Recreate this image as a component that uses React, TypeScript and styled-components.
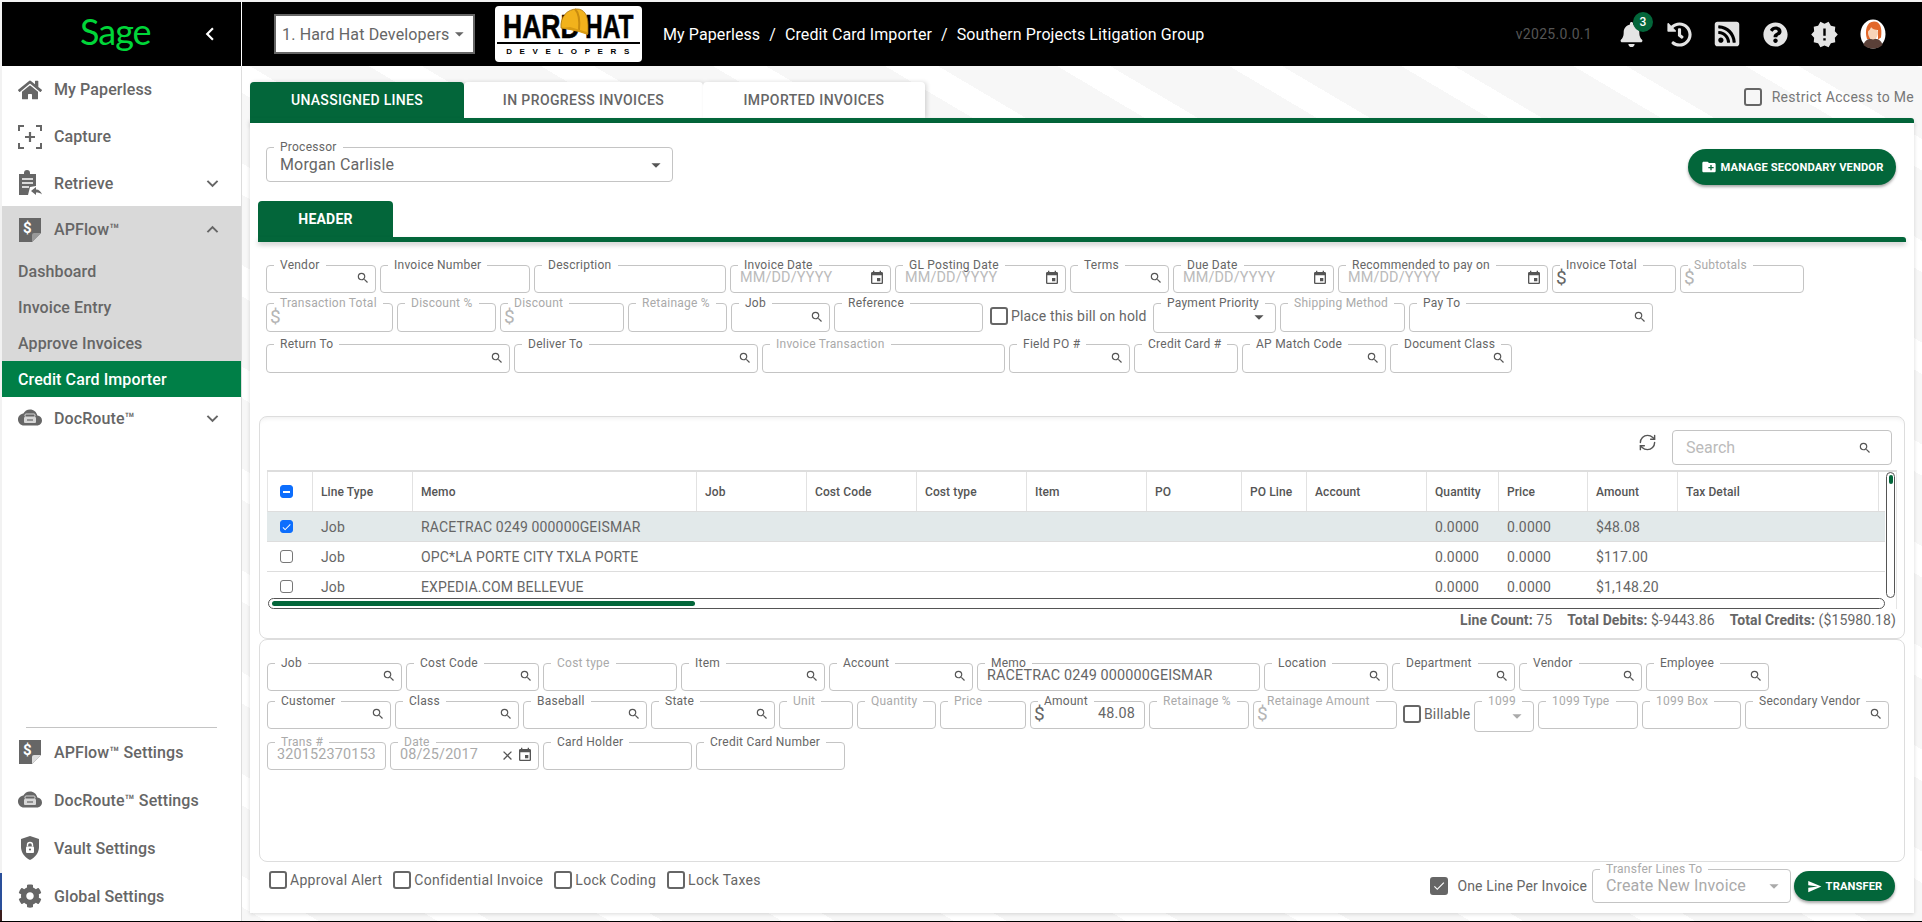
import React from 'react'
import styled, { createGlobalStyle } from 'styled-components'
import { FaHome, FaBell, FaHistory, FaRssSquare, FaQuestionCircle, FaCog } from 'react-icons/fa'
import {
  MdSearch, MdEvent, MdArrowDropDown, MdExpandMore, MdExpandLess, MdChevronLeft,
  MdNewReleases, MdCreateNewFolder, MdSend, MdCheck, MdClose,
} from 'react-icons/md'
import { RefreshCw } from 'lucide-react'

const GREEN = '#03663a'
const TEXT = '#666'
const LINE = '#c4c4c4'
const MUTED = '#aaa'

const GlobalStyle = createGlobalStyle`
  html, body { margin: 0; padding: 0; background: #f2f2f2; }
  body { font-family: Roboto, "Liberation Sans", sans-serif; color: ${TEXT}; }
  * { box-sizing: border-box; }
`

const Shell = styled.div`
  width: 1922px;
  height: 922px;
  overflow: hidden;
  display: flex;
  flex-direction: column;
  padding-top: 2px;
  background: #f2f2f2;
`

const TopBar = styled.header`
  height: 64px;
  margin-left: 2px;
  flex: none;
  display: flex;
  align-items: center;
  background: #000;
`

const Brand = styled.div`
  width: 240px;
  height: 100%;
  flex: none;
  display: flex;
  align-items: center;
  border-right: 1px solid #fff;
  padding-left: 78px;
`

const SageMark = styled.span`
  font-family: Lato, sans-serif;
  font-size: 36px;
  line-height: 1;
  letter-spacing: -1px;
  color: #00d639;
  margin-top: -6px;
  width: 117px;
`

const Collapse = styled.span`
  display: flex;
  color: #fff;
  font-size: 26px;
`

const CompanySelect = styled.div`
  width: 201px;
  height: 40px;
  margin-left: 32px;
  flex: none;
  display: flex;
  align-items: center;
  justify-content: space-between;
  padding: 0 3px 0 6px;
  background: #fff;
  border: 2.5px solid #666;
  font-size: 16px;
  letter-spacing: 0.15px;
  color: ${TEXT};
  white-space: nowrap;
`

const LogoBox = styled.div`
  position: relative;
  width: 147px;
  height: 56px;
  margin-left: 20px;
  flex: none;
  display: flex;
  flex-direction: column;
  align-items: center;
  background: #fff;
  border-radius: 4px;
  color: #000;
  font-family: "Liberation Sans", sans-serif;
`

const LogoWords = styled.div`
  height: 34px;
  margin-top: 4px;
  width: 143px;
  display: flex;
  justify-content: space-between;
  padding: 0 5px 0 6px;
  font-size: 34px;
  line-height: 33px;
  font-weight: 700;
  border-bottom: 2px solid #000;
  white-space: nowrap;
`

const LogoWord = styled.span<{ $w: number; $sx: number }>`
  display: inline-block;
  width: ${(p) => p.$w}px;
  transform: scaleX(${(p) => p.$sx});
  transform-origin: left center;
  -webkit-text-stroke: 0.6px #000;
`

const LogoSub = styled.div`
  font-size: 8px;
  font-weight: 700;
  letter-spacing: 7.6px;
  margin-top: 3px;
  margin-right: -6px;
  line-height: 10px;
`

const LogoHelmet = styled.svg`
  position: absolute;
  left: 62px;
  top: 1px;
  width: 34px;
  height: 34px;
`

const Crumbs = styled.nav`
  margin-left: 21px;
  display: flex;
  gap: 9px;
  color: #fff;
  font-size: 16px;
  letter-spacing: 0.1px;
  white-space: nowrap;
`

const TopRight = styled.div`
  margin-left: auto;
  display: flex;
  align-items: center;
  padding-right: 25px;
`

const Version = styled.span`
  font-size: 14px;
  letter-spacing: 0.3px;
  color: #555;
  margin-right: 15px;
`

const TopIcon = styled.span<{ $w?: number }>`
  position: relative;
  width: ${(p) => p.$w ?? 48}px;
  height: 30px;
  display: flex;
  align-items: center;
  justify-content: center;
  color: #e4e4e4;
  font-size: 25px;
`

const Badge = styled.span`
  position: absolute;
  top: -7px;
  right: 2px;
  width: 20px;
  height: 20px;
  border-radius: 50%;
  background: ${GREEN};
  color: #fff;
  font-size: 12px;
  font-weight: 500;
  display: flex;
  align-items: center;
  justify-content: center;
`

const Body = styled.div`
  flex: 1;
  min-height: 0;
  display: flex;
`

const Gutter = styled.div`
  width: 2px;
  flex: none;
  display: flex;
  flex-direction: column;
  justify-content: flex-end;
`

const GutterMark = styled.div<{ $c: string; $h: number }>`
  height: ${(p) => p.$h}px;
  background: ${(p) => p.$c};
`

const Sidebar = styled.aside`
  width: 240px;
  flex: none;
  display: flex;
  flex-direction: column;
  background: #fff;
  border-right: 1px solid #ddd;
`

const NavRow = styled.div<{ $h?: number; $open?: boolean }>`
  height: ${(p) => p.$h ?? 48}px;
  flex: none;
  display: flex;
  align-items: center;
  gap: 12px;
  padding: 0 16px;
  font-size: 16px;
  font-weight: 500;
  letter-spacing: 0.1px;
  color: ${TEXT};
  background: ${(p) => (p.$open ? '#d9d9d9' : 'transparent')};
  white-space: nowrap;
`

const NavIcon = styled.span`
  width: 24px;
  height: 24px;
  flex: none;
  display: flex;
  align-items: center;
  justify-content: center;
  color: ${TEXT};
  font-size: 24px;
`

const NavCaret = styled.span`
  margin-left: auto;
  margin-right: 1px;
  display: flex;
  font-size: 23px;
`

const SubRow = styled.div<{ $active?: boolean }>`
  height: 36px;
  flex: none;
  display: flex;
  align-items: center;
  padding-left: 16px;
  font-size: 16px;
  font-weight: 500;
  letter-spacing: 0.1px;
  color: ${(p) => (p.$active ? '#fff' : TEXT)};
  background: ${(p) => (p.$active ? '#007f47' : '#d9d9d9')};
`

const SideBottom = styled.div`
  margin-top: auto;
  margin-bottom: 1px;
`

const SideRule = styled.div`
  height: 1px;
  margin: 0 24px;
  background: #c4c4c4;
`

const Main = styled.main`
  flex: 1;
  min-width: 0;
  display: flex;
  flex-direction: column;
  padding: 16px 8px 8px;
  background: repeating-linear-gradient(
    30.6deg,
    #f7f7f7 0 12px,
    #fff 12px 39px,
    #f7f7f7 39px 87.6px
  );
`

const TabBar = styled.div`
  height: 36px;
  flex: none;
  display: flex;
`

const Tab = styled.div<{ $w: number; $active?: boolean }>`
  width: ${(p) => p.$w}px;
  display: flex;
  align-items: center;
  justify-content: center;
  border-radius: 4px 4px 0 0;
  font-size: 14px;
  font-weight: 500;
  letter-spacing: ${(p) => (p.$active ? 0.3 : 0.4)}px;
  text-transform: uppercase;
  background: ${(p) => (p.$active ? GREEN : '#fff')};
  color: ${(p) => (p.$active ? '#fff' : TEXT)};
  box-shadow: 2px 0 4px rgba(0, 0, 0, 0.14);
`

const Restrict = styled.label`
  margin-left: auto;
  align-self: flex-start;
  margin-top: 6px;
  display: flex;
  align-items: center;
  gap: 10px;
  font-size: 14px;
  letter-spacing: 0.3px;
  color: #777;
  white-space: nowrap;
`

const GreenRule = styled.div<{ $inset?: number }>`
  height: 5px;
  flex: none;
  margin: 0 ${(p) => p.$inset ?? 0}px;
  background: ${GREEN};
  border-radius: 0 3px 0 0;
  box-shadow: 0 3px 5px rgba(0, 0, 0, 0.2);
`

const Panel = styled.div`
  flex: 1;
  min-height: 0;
  display: flex;
  flex-direction: column;
  background: #fff;
  box-shadow: 0 1px 4px rgba(0, 0, 0, 0.15);
`

const TopRow = styled.div`
  height: 78px;
  flex: none;
  display: flex;
  justify-content: space-between;
  align-items: flex-start;
  padding: 17px 18px 0 16px;
`

const PillButton = styled.button<{ $w: number; $h: number; $top: number }>`
  width: ${(p) => p.$w}px;
  height: ${(p) => p.$h}px;
  margin-top: ${(p) => p.$top}px;
  flex: none;
  border: 0;
  border-radius: ${(p) => p.$h / 2}px;
  display: flex;
  align-items: center;
  justify-content: center;
  gap: 4px;
  font-family: inherit;
  font-size: 11.2px;
  font-weight: 700;
  letter-spacing: 0.1px;
  text-transform: uppercase;
  color: #fff;
  background: ${GREEN};
  box-shadow: 0 2px 3px rgba(0, 0, 0, 0.35);
  white-space: nowrap;
`

const HeaderTab = styled.div`
  width: 135px;
  height: 36px;
  margin-left: 8px;
  flex: none;
  display: flex;
  align-items: center;
  justify-content: center;
  border-radius: 4px 4px 0 0;
  background: ${GREEN};
  color: #fff;
  font-size: 14px;
  font-weight: 700;
  letter-spacing: 0.2px;
`

const FormArea = styled.div`
  height: 174px;
  flex: none;
  padding: 16px 16px 0;
`

const FormRow = styled.div<{ $h: number; $top?: number }>`
  height: ${(p) => p.$h}px;
  margin-top: ${(p) => p.$top ?? 0}px;
  display: flex;
  gap: 4px;
`

const Box = styled.fieldset<{ $w: number; $h?: number; $large?: boolean }>`
  width: ${(p) => p.$w}px;
  height: ${(p) => (p.$h ? `${p.$h}px` : '100%')};
  flex: none;
  min-width: 0;
  margin: 0;
  padding: 0 9px 2px ${(p) => (p.$large ? 13 : 9)}px;
  display: flex;
  border: 1px solid ${LINE};
  border-radius: 4px;
  background: #fff;
`

const Legend = styled.legend<{ $off?: boolean; $large?: boolean }>`
  margin-left: ${(p) => (p.$large ? -6 : -2)}px;
  padding: 0 6px;
  font-size: 12px;
  line-height: 14px;
  letter-spacing: 0.25px;
  white-space: nowrap;
  color: ${(p) => (p.$off ? MUTED : TEXT)};
`

const FieldBody = styled.div<{ $off?: boolean; $large?: boolean }>`
  flex: 1;
  min-width: 0;
  height: 100%;
  margin-top: ${(p) => (p.$large ? -2 : -3)}px;
  display: flex;
  align-items: center;
  font-size: ${(p) => (p.$large ? 16 : 14.4)}px;
  line-height: 16px;
  letter-spacing: 0.15px;
  white-space: nowrap;
  color: ${(p) => (p.$off ? MUTED : TEXT)};
`

const Value = styled.span<{ $right?: boolean }>`
  flex: 1;
  min-width: 0;
  text-align: ${(p) => (p.$right ? 'right' : 'left')};
`

const Placeholder = styled.span`
  flex: 1;
  color: #bbb;
`

const Prefix = styled.span<{ $off?: boolean }>`
  margin-left: -6px;
  font-size: 19px;
  color: ${(p) => (p.$off ? '#b5b5b5' : TEXT)};
`

const FieldIcon = styled.span<{ $size?: number; $off?: boolean }>`
  flex: none;
  margin-right: -4px;
  display: flex;
  font-size: ${(p) => p.$size ?? 14}px;
  color: ${(p) => (p.$off ? MUTED : '#555')};
`

const Spacer = styled.span`
  width: 6px;
`

const CheckBox = styled.span<{ $on?: boolean }>`
  width: 18px;
  height: 18px;
  flex: none;
  display: flex;
  align-items: center;
  justify-content: center;
  border: 2px solid #666;
  border-radius: 3px;
  color: #fff;
  font-size: 16px;
  background: ${(p) => (p.$on ? '#666' : 'transparent')};
`

const CheckField = styled.label<{ $w: number; $left: number }>`
  width: ${(p) => p.$w}px;
  margin-left: ${(p) => p.$left}px;
  padding-top: 4px;
  flex: none;
  height: 24px;
  align-self: center;
  display: flex;
  align-items: center;
  gap: 3px;
  font-size: 14px;
  letter-spacing: 0.15px;
  white-space: nowrap;
  color: ${TEXT};
`

const Card = styled.section<{ $h: number }>`
  height: ${(p) => p.$h}px;
  margin: 0 9px;
  flex: none;
  border: 1px solid #ddd;
  border-radius: 8px;
  background: #fff;
`

const GridCard = styled(Card)`
  box-shadow: inset 0 5px 5px -4px rgba(0, 0, 0, 0.08);
`

const GridTools = styled.div`
  height: 53px;
  display: flex;
  justify-content: flex-end;
  align-items: flex-start;
  gap: 15px;
  padding: 13px 12px 0 0;
`

const RefreshButton = styled.span`
  display: flex;
  margin-top: 3px;
  color: #555;
`

const SearchBox = styled.div`
  width: 220px;
  height: 35px;
  display: flex;
  align-items: center;
  justify-content: space-between;
  padding: 0 19px 0 13px;
  border: 1px solid ${LINE};
  border-radius: 4px;
  font-size: 16px;
  color: #bbb;
`

const SearchGlyph = styled.span`
  display: flex;
  font-size: 14px;
  color: #555;
`

const TableFrame = styled.div`
  margin: 0 7px;
  display: flex;
  gap: 1px;
  border-top: 2px solid #ddd;
  border-right: 1px solid #e5e5e5;
`

const TableSide = styled.div`
  width: 1618px;
  flex: none;
`

const TableBody = styled.div`
  height: 126px;
  overflow: hidden;
`

const columns = '45px 100px 284px 110px 110px 110px 120px 95px 65px 120px 72px 89px 90px 201px 1fr'

const HeadRow = styled.div`
  height: 40px;
  display: grid;
  grid-template-columns: ${columns};
  border-bottom: 1px solid #ddd;
  border-left: 1px solid #e5e5e5;
`

const HeadCell = styled.div`
  display: flex;
  align-items: center;
  padding-left: 8px;
  font-size: 12px;
  font-weight: 500;
  letter-spacing: 0.1px;
  color: #555;
  border-right: 1px solid #e2e2e2;
  white-space: nowrap;
`

const HeadBoxCell = styled(HeadCell)`
  padding: 0 7px 0 0;
  justify-content: center;
`

const DataRow = styled.div<{ $picked?: boolean }>`
  height: 30px;
  display: grid;
  grid-template-columns: ${columns};
  align-items: center;
  border-bottom: 1px solid #ddd;
  background: ${(p) => (p.$picked ? '#e2e9ea' : '#fff')};
`

const DataCell = styled.div`
  padding-left: 9px;
  font-size: 14px;
  letter-spacing: 0.15px;
  color: ${TEXT};
  white-space: nowrap;
`

const BoxCell = styled.div`
  display: flex;
  justify-content: center;
  padding-right: 7px;
`

const TinyCheck = styled.span<{ $state?: 'on' | 'mixed' }>`
  width: 13px;
  height: 13px;
  display: flex;
  align-items: center;
  justify-content: center;
  border-radius: 3px;
  border: 1px solid ${(p) => (p.$state ? '#0d6efd' : '#777')};
  background: ${(p) => (p.$state ? '#0d6efd' : '#fff')};
  color: #fff;
  font-size: 12px;
`

const MixedDash = styled.span`
  width: 7px;
  height: 2px;
  background: #fff;
`

const HScroll = styled.div`
  width: 1617px;
  height: 11px;
  margin-left: 1px;
  padding: 2px 3px;
  border: 1px solid #555;
  border-radius: 6px;
  background: #fff;
`

const HThumb = styled.div`
  width: 423px;
  height: 5px;
  border-radius: 3px;
  background: ${GREEN};
`

const VScroll = styled.div`
  width: 9px;
  height: 126px;
  padding: 2px 1.5px;
  border: 1px solid #555;
  border-radius: 5px;
  background: #fff;
`

const VThumb = styled.div`
  height: 9px;
  border-radius: 3px;
  background: ${GREEN};
`

const Totals = styled.div`
  height: 22px;
  margin: 0 8px;
  display: flex;
  align-items: center;
  justify-content: flex-end;
  gap: 15px;
  font-size: 14px;
  letter-spacing: 0.1px;
  color: ${TEXT};
  white-space: nowrap;
`

const TotalKey = styled.b`
  font-weight: 700;
`

const EntryCard = styled(Card)`
  padding: 16px 7px 0;
`

const BottomBar = styled.div`
  flex: 1;
  display: flex;
  justify-content: space-between;
  padding: 0 19px;
`

const FlagGroup = styled.div`
  display: flex;
  gap: 11px;
  margin-top: 9px;
  height: 18px;
`

const Flag = styled.label`
  display: flex;
  align-items: center;
  gap: 3px;
  font-size: 14px;
  letter-spacing: 0.3px;
  color: ${TEXT};
  white-space: nowrap;
`

const TransferGroup = styled.div`
  display: flex;
  align-items: flex-start;
`

const OneLine = styled.label`
  margin-top: 15px;
  margin-right: 5px;
  display: flex;
  align-items: center;
  gap: 9px;
  font-size: 14px;
  letter-spacing: 0.15px;
  color: ${TEXT};
  white-space: nowrap;
`

const TransferBox = styled.div`
  height: 41px;
  display: flex;
  margin-right: 3px;
`

const BlackEdge = styled.div`
  height: 1px;
  flex: none;
  background: #000;
`

/* drawn icons */
const CaptureIcon = () => (
  <svg width="24" height="24" viewBox="0 0 24 24" fill="none" stroke="#666" strokeWidth="2">
    <path d="M1 6V1h5M18 1h5v5M23 18v5h-5M6 23H1v-5" />
    <path d="M12 7v10M7 12h10" strokeWidth="2.2" />
  </svg>
)

const RetrieveIcon = () => (
  <svg width="24" height="26" viewBox="0 0 24 26">
    <path d="M1 4h5V3a3 3 0 0 1 6 0v1h6v12l-6 1-2 8H1z" fill="#666" />
    <path d="M4 9h11M4 13h11M4 17h7" stroke="#fff" strokeWidth="1.6" />
    <path d="M13 21l5-4v2.5c3 0 5 2 6 5-1.500-1.500-3.500-2-6-2V25z" fill="#666" />
  </svg>
)

const FlowIcon = ({ light }: { light?: boolean }) => (
  <svg width="24" height="24" viewBox="0 0 24 24">
    <path d="M1 0h22v15l-9 9H1z" fill="#666" />
    <path d="M14 24v-7a2 2 0 0 1 2-2h7z" fill={light ? '#ddd' : '#999'} />
    <text x="5" y="15" fontFamily="Roboto, sans-serif" fontSize="15" fontWeight="700" fill="#fff">$</text>
  </svg>
)

const RouteIcon = () => (
  <svg width="24" height="18" viewBox="0 0 24 18">
    <path d="M19.350 6.540C18.670 3.090 15.640.500 12 .500 9.110.500 6.600 2.140 5.350 4.540 2.340 4.860 0 7.410 0 10.500c0 3.310 2.690 6 6 6h13c2.760 0 5-2.240 5-5 0-2.640-2.050-4.780-4.650-4.960z" fill="#666" />
    <rect x="7" y="5" width="10" height="3" rx="1" fill="none" stroke="#d6d6d6" strokeWidth="1" />
    <rect x="6" y="8" width="12" height="6" rx="1" fill="#d6d6d6" />
    <path d="M9 11h6" stroke="#666" strokeWidth="1.200" />
  </svg>
)

const VaultIcon = () => (
  <svg width="24" height="24" viewBox="0 0 24 24">
    <path d="M12 0L3 3v8c0 5.550 3.840 10.740 9 13 5.160-2.260 9-7.450 9-13V3z" fill="#666" />
    <rect x="8" y="10.500" width="8" height="6.500" rx="1" fill="#fff" />
    <path d="M9.500 10.500V9a2.500 2.500 0 0 1 5 0v1.500" fill="none" stroke="#fff" strokeWidth="1.400" />
    <circle cx="12" cy="13.500" r="1.100" fill="#666" />
  </svg>
)

const AvatarIcon = () => (
  <svg width="26" height="30" viewBox="0 0 26 30">
    <ellipse cx="13" cy="15" rx="12.500" ry="14.500" fill="#fff" />
    <path d="M3.500 26c1-4.500 4.500-6.500 9.500-6.500s8.500 2 9.500 6.500c-2.500 2.500-5.500 3.500-9.500 3.500s-7-1-9.500-3.500z" fill="#5a4038" />
    <path d="M7 20C4.500 12 6.500 2.500 14 2.500c6 0 8.500 6 7 16l-3 2V11H10v9z" fill="#e2672a" />
    <ellipse cx="13" cy="14" rx="5" ry="6.500" fill="#f8d4b8" />
    <path d="M8 12c0-4 2-6 5-6s5 2 5 5c-3 0-6-1-7-3-.500 2-1.500 3-3 4z" fill="#e2672a" />
  </svg>
)

const HelmetArt = () => (
  <LogoHelmet viewBox="0 0 34 34">
    <path d="M4 21C3 10 10 2 20 2c7 0 11 6 11 16v9l-9-3c-7-2-13-2-18-3z" fill="#f2b21c" stroke="#a8750d" strokeWidth="0.800" />
    <path d="M18 2c3 3 5 10 4 21" fill="none" stroke="#c98c10" strokeWidth="2" />
    <path d="M4 21l18 4 9 3-1-3-17-5z" fill="#d99a12" />
  </LogoHelmet>
)

type FieldIconKind = 'search' | 'date' | 'caret'

interface FieldProps {
  label: string
  w: number
  h?: number
  off?: boolean
  large?: boolean
  icon?: FieldIconKind
  value?: string
  hint?: string
  money?: boolean
  right?: boolean
  clear?: boolean
}

const Field: React.FC<FieldProps> = ({ label, w, h, off, large, icon, value, hint, money, right, clear }) => (
  <Box $w={w} $h={h} $large={large}>
    <Legend $off={off} $large={large}>{label}</Legend>
    <FieldBody $off={off} $large={large}>
      {money && <Prefix $off={off}>$</Prefix>}
      {hint ? <Placeholder>{hint}</Placeholder> : <Value $right={right}>{value}</Value>}
      {clear && <FieldIcon $size={15}><MdClose /></FieldIcon>}
      {clear && <Spacer />}
      {icon === 'search' && <FieldIcon><MdSearch /></FieldIcon>}
      {icon === 'date' && <FieldIcon $size={16}><MdEvent /></FieldIcon>}
      {icon === 'caret' && <FieldIcon $size={22} $off={off}><MdArrowDropDown /></FieldIcon>}
    </FieldBody>
  </Box>
)

const heads = ['Line Type', 'Memo', 'Job', 'Cost Code', 'Cost type', 'Item', 'PO', 'PO Line', 'Account', 'Quantity', 'Price', 'Amount', 'Tax Detail', '']

const lines = [
  { memo: 'RACETRAC 0249 000000GEISMAR', amount: '$48.08', picked: true },
  { memo: 'OPC*LA PORTE CITY TXLA PORTE', amount: '$117.00' },
  { memo: 'EXPEDIA.COM BELLEVUE', amount: '$1,148.20' },
]

const App: React.FC = () => {
  return (
    <Shell>
      <GlobalStyle />
      <TopBar>
        <Brand>
          <SageMark>Sage</SageMark>
          <Collapse><MdChevronLeft /></Collapse>
        </Brand>
        <CompanySelect>
          1. Hard Hat Developers
          <MdArrowDropDown size={22} />
        </CompanySelect>
        <LogoBox>
          <LogoWords>
            <LogoWord $w={76} $sx={0.78}>HARD</LogoWord>
            <LogoWord $w={50} $sx={0.72}>HAT</LogoWord>
          </LogoWords>
          <LogoSub>DEVELOPERS</LogoSub>
          <HelmetArt />
        </LogoBox>
        <Crumbs>
          <span>My Paperless</span><span>/</span>
          <span>Credit Card Importer</span><span>/</span>
          <span>Southern Projects Litigation Group</span>
        </Crumbs>
        <TopRight>
          <Version>v2025.0.0.1</Version>
          <TopIcon><FaBell /><Badge>3</Badge></TopIcon>
          <TopIcon><FaHistory /></TopIcon>
          <TopIcon><FaRssSquare size={28} /></TopIcon>
          <TopIcon><FaQuestionCircle size={25} /></TopIcon>
          <TopIcon $w={50}><MdNewReleases size={29} /></TopIcon>
          <TopIcon><AvatarIcon /></TopIcon>
        </TopRight>
      </TopBar>
      <Body>
        <Gutter>
          <GutterMark $c="#2a4f9a" $h={37} />
          <GutterMark $c="#3a1d1d" $h={11} />
        </Gutter>
        <Sidebar>
          <NavRow $h={47}><NavIcon><FaHome /></NavIcon>My Paperless</NavRow>
          <NavRow $h={47}><NavIcon><CaptureIcon /></NavIcon>Capture</NavRow>
          <NavRow $h={46}><NavIcon><RetrieveIcon /></NavIcon>Retrieve<NavCaret><MdExpandMore /></NavCaret></NavRow>
          <NavRow $h={47} $open><NavIcon><FlowIcon /></NavIcon>APFlow™<NavCaret><MdExpandLess /></NavCaret></NavRow>
          <SubRow>Dashboard</SubRow>
          <SubRow>Invoice Entry</SubRow>
          <SubRow>Approve Invoices</SubRow>
          <SubRow $active>Credit Card Importer</SubRow>
          <NavRow $h={42}><NavIcon><RouteIcon /></NavIcon>DocRoute™<NavCaret><MdExpandMore /></NavCaret></NavRow>
          <SideBottom>
            <SideRule />
            <NavRow><NavIcon><FlowIcon light /></NavIcon>APFlow™ Settings</NavRow>
            <NavRow><NavIcon><RouteIcon /></NavIcon>DocRoute™ Settings</NavRow>
            <NavRow><NavIcon><VaultIcon /></NavIcon>Vault Settings</NavRow>
            <NavRow><NavIcon><FaCog /></NavIcon>Global Settings</NavRow>
          </SideBottom>
        </Sidebar>
        <Main>
          <TabBar>
            <Tab $w={214} $active>Unassigned Lines</Tab>
            <Tab $w={239}>In Progress Invoices</Tab>
            <Tab $w={222}>Imported Invoices</Tab>
            <Restrict><CheckBox />Restrict Access to Me</Restrict>
          </TabBar>
          <GreenRule />
          <Panel>
            <TopRow>
              <Field label="Processor" w={407} h={42} large value="Morgan Carlisle" icon="caret" />
              <PillButton $w={208} $h={36} $top={9}>
                <MdCreateNewFolder size={16} />
                Manage Secondary Vendor
              </PillButton>
            </TopRow>
            <HeaderTab>HEADER</HeaderTab>
            <GreenRule $inset={8} />
            <FormArea>
              <FormRow $h={35}>
                <Field label="Vendor" w={110} icon="search" />
                <Field label="Invoice Number" w={150} />
                <Field label="Description" w={192} />
                <Field label="Invoice Date" w={161} hint="MM/DD/YYYY" icon="date" />
                <Field label="GL Posting Date" w={171} hint="MM/DD/YYYY" icon="date" />
                <Field label="Terms" w={99} icon="search" />
                <Field label="Due Date" w={161} hint="MM/DD/YYYY" icon="date" />
                <Field label="Recommended to pay on" w={210} hint="MM/DD/YYYY" icon="date" />
                <Field label="Invoice Total" w={124} money />
                <Field label="Subtotals" w={124} money off />
              </FormRow>
              <FormRow $h={36} $top={3}>
                <Field label="Transaction Total" w={127} money off />
                <Field label="Discount %" w={99} off />
                <Field label="Discount" w={124} money off />
                <Field label="Retainage %" w={99} off />
                <Field label="Job" w={99} icon="search" />
                <Field label="Reference" w={149} />
                <CheckField $w={159} $left={3}><CheckBox />Place this bill on hold</CheckField>
                <Field label="Payment Priority" w={123} h={37} icon="caret" />
                <Field label="Shipping Method" w={125} off />
                <Field label="Pay To" w={244} icon="search" />
              </FormRow>
              <FormRow $h={36} $top={5}>
                <Field label="Return To" w={244} icon="search" />
                <Field label="Deliver To" w={244} icon="search" />
                <Field label="Invoice Transaction" w={243} off />
                <Field label="Field PO #" w={121} icon="search" />
                <Field label="Credit Card #" w={104} />
                <Field label="AP Match Code" w={144} icon="search" />
                <Field label="Document Class" w={122} icon="search" />
              </FormRow>
            </FormArea>
            <GridCard $h={223}>
              <GridTools>
                <RefreshButton><RefreshCw size={19} strokeWidth={1.8} /></RefreshButton>
                <SearchBox>Search<SearchGlyph><MdSearch /></SearchGlyph></SearchBox>
              </GridTools>
              <TableFrame>
                <TableSide>
                  <TableBody>
                    <HeadRow>
                      <HeadBoxCell><TinyCheck $state="mixed"><MixedDash /></TinyCheck></HeadBoxCell>
                      {heads.map((h, i) => <HeadCell key={i}>{h}</HeadCell>)}
                    </HeadRow>
                    {lines.map((l) => (
                      <DataRow key={l.memo} $picked={l.picked}>
                        <BoxCell>
                          <TinyCheck $state={l.picked ? 'on' : undefined}>{l.picked && <MdCheck />}</TinyCheck>
                        </BoxCell>
                        <DataCell>Job</DataCell>
                        <DataCell>{l.memo}</DataCell>
                        <DataCell /><DataCell /><DataCell /><DataCell /><DataCell /><DataCell /><DataCell />
                        <DataCell>0.0000</DataCell>
                        <DataCell>0.0000</DataCell>
                        <DataCell>{l.amount}</DataCell>
                      </DataRow>
                    ))}
                  </TableBody>
                  <HScroll><HThumb /></HScroll>
                </TableSide>
                <VScroll><VThumb /></VScroll>
              </TableFrame>
              <Totals>
                <span><TotalKey>Line Count:</TotalKey> 75</span>
                <span><TotalKey>Total Debits:</TotalKey> $-9443.86</span>
                <span><TotalKey>Total Credits:</TotalKey> ($15980.18)</span>
              </Totals>
            </GridCard>
            <EntryCard $h={223}>
              <FormRow $h={35}>
                <Field label="Job" w={135} icon="search" />
                <Field label="Cost Code" w={133} icon="search" />
                <Field label="Cost type" w={134} off />
                <Field label="Item" w={144} icon="search" />
                <Field label="Account" w={144} icon="search" />
                <Field label="Memo" w={283} value="RACETRAC 0249 000000GEISMAR" />
                <Field label="Location" w={124} icon="search" />
                <Field label="Department" w={123} icon="search" />
                <Field label="Vendor" w={123} icon="search" />
                <Field label="Employee" w={123} icon="search" />
              </FormRow>
              <FormRow $h={35} $top={3}>
                <Field label="Customer" w={124} icon="search" />
                <Field label="Class" w={124} icon="search" />
                <Field label="Baseball" w={124} icon="search" />
                <Field label="State" w={124} icon="search" />
                <Field label="Unit" w={74} off />
                <Field label="Quantity" w={79} off />
                <Field label="Price" w={86} off />
                <Field label="Amount" w={115} money value="48.08" right />
                <Field label="Retainage %" w={100} off />
                <Field label="Retainage Amount" w={144} money off />
                <CheckField $w={67} $left={2}><CheckBox />Billable</CheckField>
                <Field label="1099" w={60} h={38} off icon="caret" />
                <Field label="1099 Type" w={100} off />
                <Field label="1099 Box" w={99} off />
                <Field label="Secondary Vendor" w={144} icon="search" />
              </FormRow>
              <FormRow $h={35} $top={6}>
                <Field label="Trans #" w={119} off value="320152370153" />
                <Field label="Date" w={149} off value="08/25/2017" icon="date" clear />
                <Field label="Card Holder" w={149} />
                <Field label="Credit Card Number" w={149} />
              </FormRow>
            </EntryCard>
            <BottomBar>
              <FlagGroup>
                <Flag><CheckBox />Approval Alert</Flag>
                <Flag><CheckBox />Confidential Invoice</Flag>
                <Flag><CheckBox />Lock Coding</Flag>
                <Flag><CheckBox />Lock Taxes</Flag>
              </FlagGroup>
              <TransferGroup>
                <OneLine><CheckBox $on><MdCheck /></CheckBox>One Line Per Invoice</OneLine>
                <TransferBox>
                  <Field label="Transfer Lines To" w={199} off large value="Create New Invoice" icon="caret" />
                </TransferBox>
                <PillButton $w={101} $h={30} $top={9}>
                  <MdSend size={15} />
                  Transfer
                </PillButton>
              </TransferGroup>
            </BottomBar>
          </Panel>
        </Main>
      </Body>
      <BlackEdge />
    </Shell>
  )
}

export default App
